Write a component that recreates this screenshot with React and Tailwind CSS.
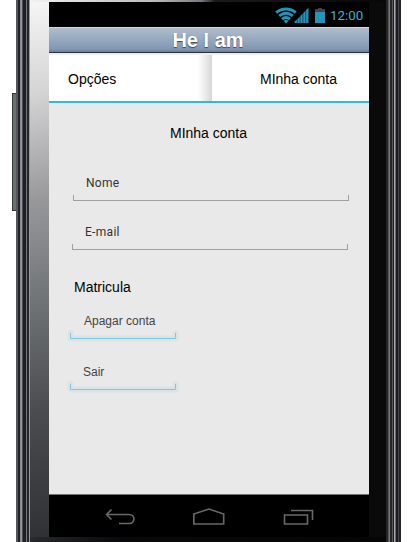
import React from "react";

function StatusBar() {
  return (
    <div className="flex h-[25px] items-center bg-black text-[#2494bb]">
      <svg className="mt-px ml-[226px] h-[17px] w-[50px]" viewBox="0 0 50 17" fill="none">
        <g stroke="#2494bb" strokeWidth="2.9">
          <path d="M1.2 5.6C7 .8 15 .8 20.8 5.6" />
          <path d="M4.2 9C8.7 5.2 13.3 5.2 17.8 9" />
          <path d="M7 12.2c2.7-2.2 5.3-2.2 8 0" />
        </g>
        <path d="M11 16.5l-2.6-2.7c1.7-1.2 3.5-1.2 5.2 0z" fill="#2494bb" />
        <path d="M19.5 16v-1.5l2.4-2V16zM22.4 16v-4l2.4-2.3V16zM25.3 16V9l2.4-2.3V16zM28.2 16V6l2.4-2.2V16zM31.1 16V3l2.4-2.3V16z" fill="#2494bb" />
        <path d="M40 2h3V1h4v1h3v3H40z" fill="#444" />
        <path d="M40 5h10v11H40z" fill="#2494bb" />
      </svg>
      <span className="mt-[2px] ml-[5px] font-[Roboto,sans-serif] text-[13.3px] leading-4 whitespace-nowrap text-[#36b0dc]">12:00</span>
    </div>
  );
}

function Field({ label, row, text, line }) {
  return (
    <div className={row}>
      <div className={"font-[Roboto,sans-serif] whitespace-nowrap text-[12px] leading-4 tracking-[0.3px] text-[#333] " + text}>{label}</div>
      <div className={"h-[6px] border-x border-b border-[#a0a0a0] " + line} />
    </div>
  );
}

function FocusField({ label, row, text }) {
  return (
    <div className={row}>
      <div className={"whitespace-nowrap text-[12px] leading-4 text-[#444] " + text}>{label}</div>
      <svg className="mt-px ml-[18px] block h-[12px] w-[112px]" viewBox="0 0 112 12" fill="none">
        <path d="M3.5 3v5.5h105V3" stroke="#dae4e8" strokeWidth="6" strokeLinecap="round" strokeLinejoin="round" />
        <path d="M3.5 3v5.5h105V3" stroke="#82c6dd" />
      </svg>
    </div>
  );
}

function NavBar() {
  return (
    <div className="h-[43px] border-t border-[#707572] bg-black">
      <svg className="h-[42px] w-[320px]" viewBox="0 0 320 42" fill="none" stroke="#686868" strokeWidth="1.6">
        <path d="M62.5 14.5l-5 5 5 5M58 19.5h22c6.5 0 6.5 9 0 9H70" />
        <path d="M144.8 19l15.2-5 14.7 5v10h-29.9z" />
        <path d="M235.5 20h23v9h-23zM242 15.5h21.5V25" />
      </svg>
    </div>
  );
}

export default function App() {
  return (
    <div className="flex h-[542px] w-[409px] overflow-hidden bg-white font-['Liberation_Sans',Arial,sans-serif] text-black">
      <div className="flex w-4 justify-end">
        <div className="mt-[93px] h-[118px] w-1 border-y border-l border-[#333a38] bg-[#6a706e]" />
      </div>
      <div className="w-[14px] bg-[linear-gradient(90deg,#55555c_0_2px,#22222a_2px_4px,#89898f_4px_5px,#99959b_5px_6px,#504f57_6px_7px,#1e1e26_7px_10px,#77757c_10px_11px,#25252c_11px_13px,#99999c_13px)]" />
      <div className="flex w-[356px] flex-col bg-[linear-gradient(90deg,#f2f2f2,#bbb_35%,#777a80_48%,#1a1a1a_52%,#070707)]">
        <div className="h-[2px]" />
        <div className="flex h-[535px]">
          <div className="w-[19px] bg-[linear-gradient(165deg,#f5f5f5_0%,#d5d5d6_17%,#98989b_37%,#6d7173_57%,#4b4c4f_76%,#303134_100%)]" />
          <main className="flex w-[320px] flex-col bg-[#e9e9e9]">
            <StatusBar />
            <header className="flex h-[26px] items-center justify-center border-t border-b border-t-[#d0d9e1] border-b-[#29303c] bg-[linear-gradient(#b0bdcc,#8197b3_88%,#667f9e)] pr-[2px]">
              <h1 className="text-[20px] leading-[24px] font-bold whitespace-nowrap text-white [text-shadow:0_1px_1px_#38475b]">He I am</h1>
            </header>
            <nav className="flex h-[50px] border-t-2 border-b-2 border-t-[#eee] border-b-[#33b5e5] bg-white text-[14px]">
              <div className="flex w-[163px] items-center bg-[linear-gradient(90deg,#fff_0_149px,#ddd_161px,#d5d5d5)] pt-[3px] pl-[19px]">Opções</div>
              <div className="flex items-center pt-[3px] pl-[48px] whitespace-nowrap">MInha conta</div>
            </nav>
            <section className="h-[391px]">
              <h2 className="pt-[20px] pl-[121px] text-[14px] leading-5 whitespace-nowrap">MInha conta</h2>
              <Field label="Nome" row="pt-[32px]" text="pl-[37px]" line="ml-[24px] mt-[4px] w-[276px]" />
              <Field label="E-mail" row="pt-[23px]" text="pl-[36px]" line="ml-[23px] mt-[4px] w-[276px]" />
              <div className="pt-[28px] pl-[25px] text-[14px] leading-[18px]">Matricula</div>
              <FocusField label="Apagar conta" row="pt-[17px]" text="pl-[35px]" />
              <FocusField label="Sair" row="pt-[22px]" text="pl-[34px]" />
            </section>
            <NavBar />
          </main>
          <div className="w-[17px] bg-[#0a0a0a]" />
        </div>
        <div className="h-[5px] bg-[linear-gradient(90deg,#292a2d,#09090b_25%,#050505)]" />
      </div>
      <div className="w-[15px] bg-[linear-gradient(90deg,#252527_0_2px,#57575b_2px_3px,#77777c_3px_4px,#25252a_4px_6px,#57575b_6px_7px,#1e1e20_7px_8px,#aaa9af_8px_9px,#67676e_9px_10px,#1c1c20_10px_12px,#454549_12px_13px,#252529_13px_15px)]" />
    </div>
  );
}
